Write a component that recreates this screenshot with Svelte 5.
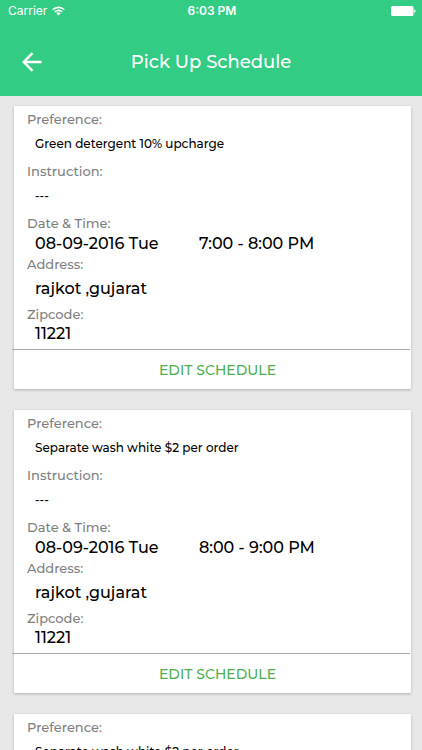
<script>
  const schedules = [
    { id: 1, preference: 'Green detergent 10% upcharge', date: '08-09-2016 Tue', time: '7:00 - 8:00 PM' },
    { id: 2, preference: 'Separate wash white $2 per order', date: '08-09-2016 Tue', time: '8:00 - 9:00 PM' },
    { id: 3, preference: 'Separate wash white $2 per order', date: '08-09-2016 Tue', time: '8:00 - 9:00 PM' }
  ];
</script>

<div class="screen">
  <header>
    <div class="status">
      <span class="carrier">
        Carrier
        <svg width="13" height="10" viewBox="0 0 13 10" fill="none" stroke="#fff" stroke-width="1.6" aria-hidden="true">
          <path d="M.7 3.7a8.3 8.3 0 0 1 11.6 0" />
          <path d="M2.8 5.9a5.3 5.3 0 0 1 7.4 0" />
          <path d="M4.3 7.3a3.2 3.2 0 0 1 4.4 0L6.5 9.6z" fill="#fff" stroke="none" />
        </svg>
      </span>
      <span class="clock">6:03 PM</span>
      <svg class="battery" width="25" height="10" viewBox="0 0 25 10" fill="#fff" aria-hidden="true">
        <rect width="22.5" height="10" rx="1.5" />
        <path d="M23.2 3.2c1.8.4 1.8 3.2 0 3.6z" />
      </svg>
    </div>
    <div class="bar">
      <button class="back" aria-label="Back">
        <svg width="20" height="20" viewBox="0 0 20 20" fill="none" stroke="#fff" stroke-width="2.4" aria-hidden="true">
          <path d="M10.5 1.2 1.8 10l8.7 8.8M2 10h17.5" />
        </svg>
      </button>
      <h1>Pick Up Schedule</h1>
    </div>
  </header>

  <main>
    {#each schedules as item (item.id)}
      <article>
        <dl>
          <dt>Preference:</dt>
          <dd class="small">{item.preference}</dd>
          <dt>Instruction:</dt>
          <dd class="small">---</dd>
          <dt>Date &amp; Time:</dt>
          <dd class="when"><span>{item.date}</span><span>{item.time}</span></dd>
          <dt>Address:</dt>
          <dd class="address">rajkot ,gujarat</dd>
          <dt>Zipcode:</dt>
          <dd>11221</dd>
        </dl>
        <hr />
        <button class="edit">EDIT SCHEDULE</button>
      </article>
    {/each}
  </main>
</div>

<style>
  :global(body) {
    margin: 0;
  }
  .screen {
    height: 100vh;
    display: flex;
    flex-direction: column;
    overflow: hidden;
    background: #e8e8e8;
    font-family: Montserrat, Inter, sans-serif;
    color: #000;
  }
  header {
    flex: none;
    background: #33cc84;
    color: #fff;
  }
  .status {
    display: grid;
    grid-template-columns: 1fr auto 1fr;
    align-items: center;
    height: 22px;
    padding: 0 6px 0 8px;
    font: 12px/22px Inter, sans-serif;
  }
  .carrier {
    display: flex;
    align-items: center;
    gap: 5px;
  }
  .clock {
    font-weight: 600;
  }
  .battery {
    justify-self: end;
  }
  .bar {
    display: grid;
    grid-template-columns: 64px 1fr 64px;
    align-items: center;
    height: 69px;
    padding-top: 5px;
  }
  button {
    border: 0;
    padding: 0;
    background: none;
    font-family: inherit;
    cursor: pointer;
  }
  .back {
    display: flex;
    align-items: center;
    justify-content: center;
    height: 44px;
  }
  h1 {
    margin: 0;
    font-size: 18px;
    font-weight: 500;
    line-height: 24px;
    text-align: center;
  }
  main {
    flex: 1;
    min-height: 0;
    display: flex;
    flex-direction: column;
    gap: 21px;
    padding: 10px 11px 0 14px;
    overflow-y: auto;
    scrollbar-width: none;
  }
  article {
    flex: none;
    background: #fff;
    border-radius: 1px;
    box-shadow: 0 1px 3px rgba(0, 0, 0, 0.25);
  }
  dl {
    margin: 0;
    padding: 3px 13px 5px;
  }
  dt {
    font-size: 13px;
    font-weight: 500;
    line-height: 20px;
    color: #808080;
  }
  dd {
    margin: 0 0 0 8px;
    font-size: 16px;
    font-weight: 500;
    line-height: 20px;
  }
  .small {
    margin-bottom: 2px;
    font-size: 12px;
    line-height: 30px;
  }
  .address {
    line-height: 30px;
  }
  .when {
    display: grid;
    grid-template-columns: 164px 1fr;
    line-height: 21px;
  }
  hr {
    height: 1px;
    margin: 0 1px 0 -2px;
    border: 0;
    background: #aaa;
  }
  .edit {
    display: block;
    width: 100%;
    height: 39px;
    padding-left: 10px;
    font-size: 14px;
    font-weight: 500;
    color: #4cae50;
  }
</style>
